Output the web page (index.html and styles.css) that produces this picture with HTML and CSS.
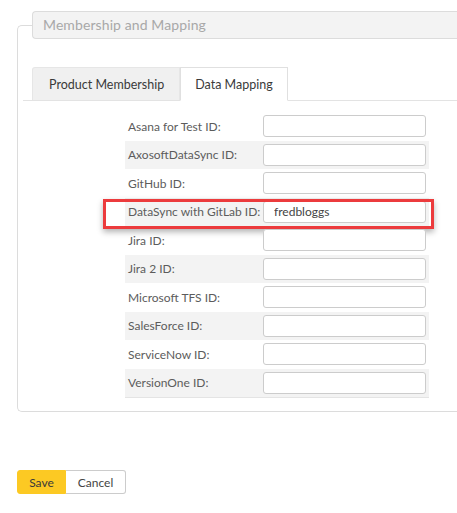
FILE: index.html
```html
<!DOCTYPE html>
<html>
<head>
<meta charset="utf-8">
<link rel="stylesheet" href="styles.css">
</head>
<body>
<fieldset class="box">
  <legend class="box-title">Membership and Mapping</legend>
  <div class="tabs">
    <div class="tab">Product Membership</div>
    <div class="tab tab-active">Data Mapping</div>
  </div>
  <div class="form">
    <div class="row"><label class="lbl">Asana for Test ID:</label><input class="inp" type="text"></div>
    <div class="row alt"><label class="lbl">AxosoftDataSync ID:</label><input class="inp" type="text"></div>
    <div class="row"><label class="lbl">GitHub ID:</label><input class="inp" type="text"></div>
    <div class="row alt highlight"><label class="lbl">DataSync with GitLab ID:</label><input class="inp" type="text" value="fredbloggs"><span class="mark"></span></div>
    <div class="row"><label class="lbl">Jira ID:</label><input class="inp" type="text"></div>
    <div class="row alt"><label class="lbl">Jira 2 ID:</label><input class="inp" type="text"></div>
    <div class="row"><label class="lbl">Microsoft TFS ID:</label><input class="inp" type="text"></div>
    <div class="row alt"><label class="lbl">SalesForce ID:</label><input class="inp" type="text"></div>
    <div class="row"><label class="lbl">ServiceNow ID:</label><input class="inp" type="text"></div>
    <div class="row alt last"><label class="lbl">VersionOne ID:</label><input class="inp" type="text"></div>
  </div>
</fieldset>
<div class="actions">
  <button class="btn btn-save">Save</button><button class="btn btn-cancel">Cancel</button>
</div>
</body>
</html>
```
FILE: styles.css
```css
html, body {
  margin: 0;
  padding: 0;
  background: #fff;
}
body {
  font-family: "Lato", "Liberation Sans", sans-serif;
  color: #555;
}
.box {
  margin: 11px 0 0 17px;
  width: 440px;
  border: 1px solid #dcdcdc;
  border-right: none;
  border-radius: 5px 0 0 5px;
  padding: 28px 0 13px 0;
  box-sizing: border-box;
  min-width: 0;
}
.box-title {
  margin-left: 14px;
  padding: 0 10px;
  width: 425px;
  height: 28px;
  box-sizing: border-box;
  line-height: 26px;
  background: #f3f3f3;
  border: 1px solid #dcdcdc;
  border-right: none;
  border-radius: 4px 0 0 4px;
  font-size: 14px;
  color: #a8a8a8;
  letter-spacing: 0.1px;
}
.tabs {
  display: flex;
  margin-left: 5px;
  padding-left: 9px;
  border-bottom: 1px solid #e3e3e3;
  height: 33px;
}
.tab {
  height: 33px;
  box-sizing: border-box;
  padding: 0 15px 0 16px;
  line-height: 33px;
  font-size: 12.5px;
  color: #3a3a3a;
  background: #f0f0f0;
  border-radius: 3px 0 0 0;
  border: 1px solid #e6e6e6;
  border-bottom: none;
}
.tab-active {
  background: #fff;
  padding: 0 14px;
  border: 1px solid #e0e0e0;
  border-bottom: 1px solid #fff;
  height: 34px;
  border-radius: 0;
}
.form {
  margin: 11px 0 0 107px;
  width: 304px;
}
.row {
  display: flex;
  align-items: center;
  height: 28.5px;
  position: relative;
}
.alt {
  background: #f3f3f3;
}
.last {
  border-bottom: 1px solid #e4e4e4;
}
.lbl {
  width: 138px;
  padding-left: 3px;
  box-sizing: border-box;
  font-size: 12px;
  color: #5c5c5c;
  white-space: nowrap;
}
.inp {
  width: 163px;
  height: 22px;
  box-sizing: border-box;
  border: 1px solid #ccc;
  border-radius: 3px;
  background: #fff;
  padding: 0 10px;
  font-family: "Lato", "Liberation Sans", sans-serif;
  font-size: 12px;
  color: #444;
  margin: 0;
}
.mark {
  position: absolute;
  left: -22px;
  top: 1px;
  width: 331px;
  height: 30px;
  box-sizing: border-box;
  border: 3px solid #ec3b3d;
  box-shadow: 0 3px 6px rgba(0, 0, 0, 0.3);
  pointer-events: none;
}
.actions {
  display: flex;
  margin: 58px 0 0 17px;
}
.btn {
  height: 24px;
  font-family: "Lato", "Liberation Sans", sans-serif;
  font-size: 12px;
  color: #3a3a3a;
  margin: 0;
  padding: 0;
}
.btn-save {
  width: 49px;
  background: #fcc923;
  border: 1px solid #fcc923;
  border-radius: 3px 0 0 3px;
}
.btn-cancel {
  width: 60px;
  background: #fff;
  border: 1px solid #ccc;
  border-left: none;
  border-radius: 0 3px 3px 0;
  color: #444;
}
```
